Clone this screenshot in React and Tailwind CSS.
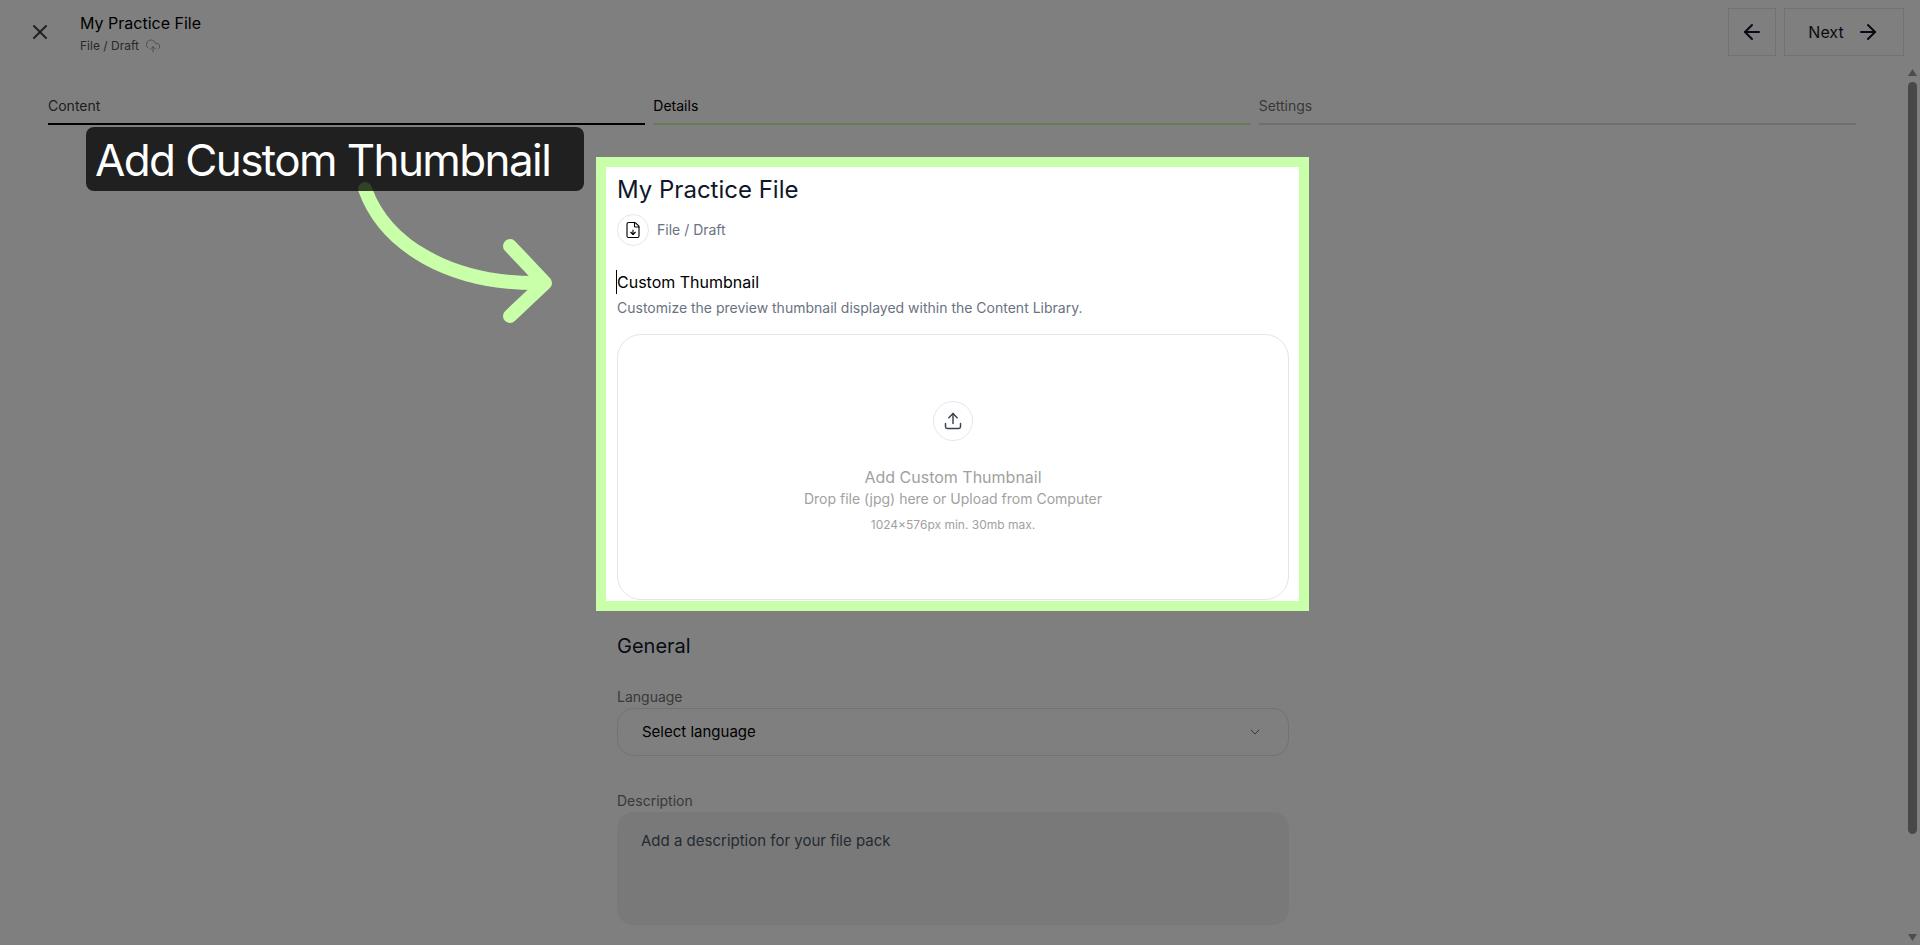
import React from "react";
import { X, ArrowLeft, ArrowRight, CloudUpload, FileDown, Upload, ChevronDown } from "lucide-react";

function Tab({ label, line, text }) {
  return (
    <div className="flex-1 flex flex-col">
      <span className={`text-sm leading-5 pb-[7px] ${text}`}>{label}</span>
      <div className={`h-[2px] ${line}`} />
    </div>
  );
}

function CircleIcon({ size, children }) {
  return (
    <div className={`${size} rounded-full border border-gray-200 bg-white flex items-center justify-center shrink-0`}>
      {children}
    </div>
  );
}

export default function App() {
  return (
    <div className="relative h-[945px] w-[1920px] overflow-hidden bg-white font-['Inter',sans-serif]">
      <header className="h-[64px] flex items-center justify-between pl-[28px] pr-[16px]">
        <div className="flex items-center gap-[28px]">
          <X className="w-6 h-6 text-neutral-700" strokeWidth={2} />
          <div className="flex flex-col mt-[1px]">
            <span className="text-base leading-6 text-black">My Practice File</span>
            <div className="flex items-center gap-[6px] text-xs leading-4 mt-[3px] text-neutral-600">
              File / Draft
              <CloudUpload className="w-4 h-4 text-neutral-500" strokeWidth={1} />
            </div>
          </div>
        </div>
        <div className="flex gap-2">
          <div className="w-12 h-12 border border-neutral-200 flex items-center justify-center">
            <ArrowLeft className="w-6 h-6 text-[#0f172a]" strokeWidth={2} />
          </div>
          <div className="w-[120px] h-12 border border-neutral-200 flex items-center justify-center gap-3 text-base text-[#0f172a]">
            Next
            <ArrowRight className="w-6 h-6" strokeWidth={2} />
          </div>
        </div>
      </header>

      <div className="flex h-[881px]">
        <main className="flex-1 min-w-0 overflow-hidden">
          <nav className="flex gap-2 pl-[48px] pr-[44px] pt-[32px]">
            <Tab label="Content" line="bg-black" text="text-neutral-700" />
            <Tab label="Details" line="bg-[#caffa9]" text="text-black" />
            <Tab label="Settings" line="bg-[#dedede]" text="text-neutral-500" />
          </nav>

          <div className="w-[672px] ml-[617px] mt-[49px]">
            <h1 className="text-2xl leading-8 text-[#0f172a]">My Practice File</h1>
            <div className="flex items-center gap-2 mt-[8px]">
              <CircleIcon size="w-8 h-8">
                <FileDown className="w-[18px] h-[18px] text-black" strokeWidth={1.5} />
              </CircleIcon>
              <span className="text-sm text-gray-500">File / Draft</span>
            </div>

            <h2 className="text-base leading-6 text-black mt-[24px] border-l border-black -ml-px w-fit">Custom Thumbnail</h2>
            <p className="text-sm leading-5 text-gray-500 mt-[4px]">Customize the preview thumbnail displayed within the Content Library.</p>

            <div className="mt-[16px] h-[266px] rounded-3xl border border-neutral-200 flex flex-col items-center pt-[66px]">
              <CircleIcon size="w-10 h-10">
                <Upload className="w-5 h-5 text-gray-700" strokeWidth={1.75} />
              </CircleIcon>
              <span className="text-base leading-6 text-neutral-400 mt-[24px]">Add Custom Thumbnail</span>
              <span className="text-sm leading-5 text-neutral-400">Drop file (jpg) here or Upload from Computer</span>
              <span className="text-xs leading-4 text-neutral-400 mt-[8px]">1024×576px min. 30mb max.</span>
            </div>

            <h2 className="text-xl leading-7 text-[#0f172a] mt-[32px]">General</h2>

            <label className="block text-sm leading-5 text-neutral-500 mt-[27px]">Language</label>
            <div className="h-12 mt-[1px] rounded-2xl border border-neutral-200 flex items-center justify-between pl-[24px] pr-[25px]">
              <span className="text-[15px] text-black">Select language</span>
              <ChevronDown className="w-4 h-4 text-neutral-500" strokeWidth={1.5} />
            </div>

            <label className="block text-sm leading-5 text-neutral-500 mt-[35px]">Description</label>
            <div className="h-[113px] mt-[1px] rounded-2xl bg-[#f3f3f3] pl-[24px] pt-[17px] text-[15px] leading-6 text-gray-600">
              Add a description for your file pack
            </div>
          </div>
        </main>

        <aside className="w-[20px] flex flex-col pl-[8px] pr-[3px] pt-[5px] pb-[4px]">
          <svg viewBox="0 0 9 7" className="w-[9px] h-[7px] shrink-0"><path d="M4.5 0 9 7H0z" fill="#9a9a9a" /></svg>
          <div className="w-[9px] h-[752px] mt-[6px] rounded-full bg-[#909090] shrink-0" />
          <div className="flex-1" />
          <svg viewBox="0 0 9 7" className="w-[9px] h-[7px] shrink-0"><path d="M4.5 7 9 0H0z" fill="#9a9a9a" /></svg>
        </aside>
      </div>

      {/* guided-tour spotlight: dims everything around the highlighted region */}
      <div className="absolute left-[596px] top-[157px] w-[713px] h-[454px] border-[10px] border-[#caffa9] shadow-[0_0_0_3000px_rgba(0,0,0,0.5)]" />

      <svg className="absolute left-[340px] top-[170px] w-[230px] h-[160px]" viewBox="0 0 230 160" fill="none">
        <path d="M25 19C45 75 110 115 203 113" stroke="#caffa9" strokeWidth="14" strokeLinecap="round" />
        <path d="M170 76 205 113 170 146" stroke="#caffa9" strokeWidth="14" strokeLinecap="round" strokeLinejoin="round" />
      </svg>

      <div className="absolute left-[86px] top-[127px] w-[498px] h-[64px] rounded-lg bg-black/75 pl-[9px] pt-[2px] flex items-center text-[44px] tracking-[-1.6px] leading-none text-white whitespace-nowrap">
        Add Custom Thumbnail
      </div>
    </div>
  );
}
